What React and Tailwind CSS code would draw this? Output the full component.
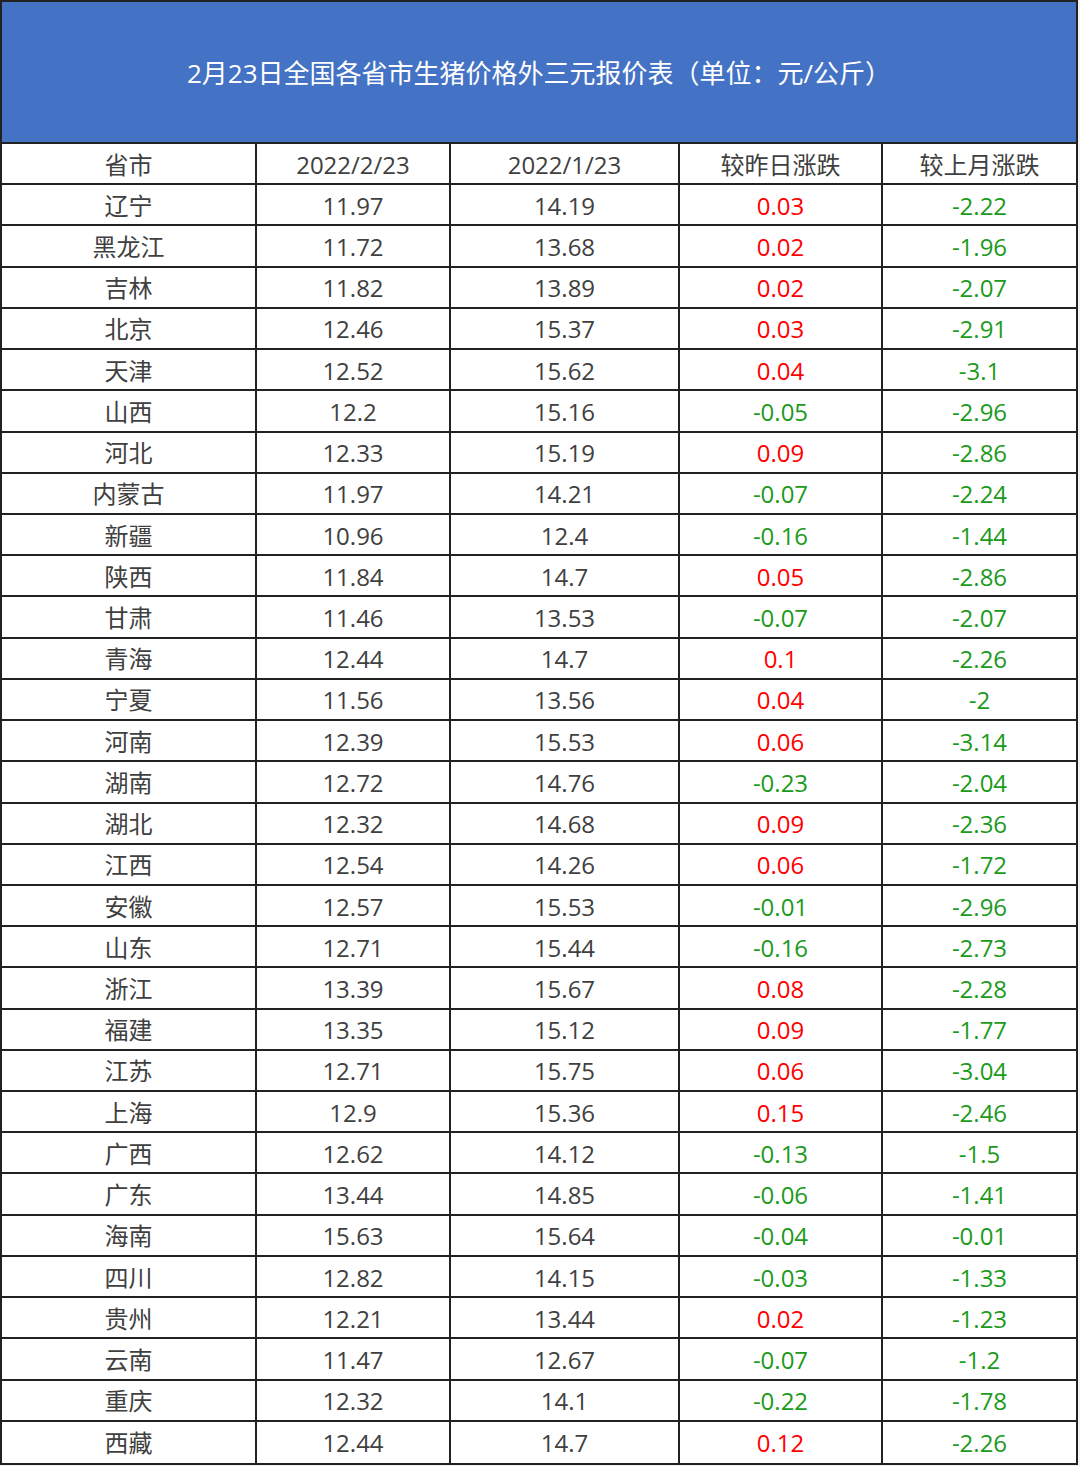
import React from 'react'

// province, 2022/2/23, 2022/1/23, day change, month change
const rows = [
  ['辽宁', '11.97', '14.19', '0.03', '-2.22'],
  ['黑龙江', '11.72', '13.68', '0.02', '-1.96'],
  ['吉林', '11.82', '13.89', '0.02', '-2.07'],
  ['北京', '12.46', '15.37', '0.03', '-2.91'],
  ['天津', '12.52', '15.62', '0.04', '-3.1'],
  ['山西', '12.2', '15.16', '-0.05', '-2.96'],
  ['河北', '12.33', '15.19', '0.09', '-2.86'],
  ['内蒙古', '11.97', '14.21', '-0.07', '-2.24'],
  ['新疆', '10.96', '12.4', '-0.16', '-1.44'],
  ['陕西', '11.84', '14.7', '0.05', '-2.86'],
  ['甘肃', '11.46', '13.53', '-0.07', '-2.07'],
  ['青海', '12.44', '14.7', '0.1', '-2.26'],
  ['宁夏', '11.56', '13.56', '0.04', '-2'],
  ['河南', '12.39', '15.53', '0.06', '-3.14'],
  ['湖南', '12.72', '14.76', '-0.23', '-2.04'],
  ['湖北', '12.32', '14.68', '0.09', '-2.36'],
  ['江西', '12.54', '14.26', '0.06', '-1.72'],
  ['安徽', '12.57', '15.53', '-0.01', '-2.96'],
  ['山东', '12.71', '15.44', '-0.16', '-2.73'],
  ['浙江', '13.39', '15.67', '0.08', '-2.28'],
  ['福建', '13.35', '15.12', '0.09', '-1.77'],
  ['江苏', '12.71', '15.75', '0.06', '-3.04'],
  ['上海', '12.9', '15.36', '0.15', '-2.46'],
  ['广西', '12.62', '14.12', '-0.13', '-1.5'],
  ['广东', '13.44', '14.85', '-0.06', '-1.41'],
  ['海南', '15.63', '15.64', '-0.04', '-0.01'],
  ['四川', '12.82', '14.15', '-0.03', '-1.33'],
  ['贵州', '12.21', '13.44', '0.02', '-1.23'],
  ['云南', '11.47', '12.67', '-0.07', '-1.2'],
  ['重庆', '12.32', '14.1', '-0.22', '-1.78'],
  ['西藏', '12.44', '14.7', '0.12', '-2.26'],
]

const colClass = [
  'w-[255px] border-r-2',
  'w-[194px] border-r-2',
  'w-[229px] border-r-2',
  'w-[203px] border-r-2',
  'flex-1',
]

const changeColor = (v) => (v.startsWith('-') ? 'text-[#1b9a1b]' : 'text-[#ff0000]')

function Row({ cells, last, header }) {
  return (
    <div className={`flex h-[41.23px] border-[#222] ${last ? '' : 'border-b-2'}`}>
      {cells.map((c, i) => (
        <div
          key={i}
          className={`${colClass[i]} border-[#222] flex items-center justify-center pt-[2px] ${
            !header && i >= 3 ? changeColor(c) : 'text-[#404040]'
          }`}
        >
          {c}
        </div>
      ))}
    </div>
  )
}

export default function App() {
  return (
    <div
      className="bg-[#f2f2f2] w-[1080px] h-[1466px]"
      style={{ fontFamily: '"Open Sans", "Noto Sans CJK SC", sans-serif' }}
    >
      <div className="w-[1078px] border-2 border-[#222] bg-white text-[24px] leading-none">
        <div className="h-[142px] bg-[#4472c4] border-b-2 border-[#222] flex items-center justify-center text-white text-[26px] pt-[2px]">
          2月23日全国各省市生猪价格外三元报价表（单位：元/公斤）
        </div>
        <Row header cells={['省市', '2022/2/23', '2022/1/23', '较昨日涨跌', '较上月涨跌']} />
        {rows.map((r, i) => (
          <Row key={r[0]} cells={r} last={i === rows.length - 1} />
        ))}
      </div>
    </div>
  )
}
